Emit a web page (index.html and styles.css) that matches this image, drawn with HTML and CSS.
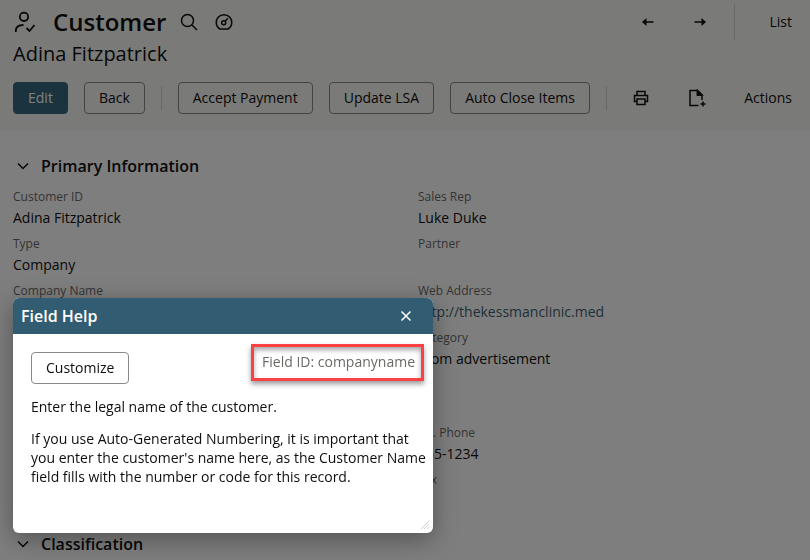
FILE: index.html
```
<!DOCTYPE html>
<html lang="en">
<head>
  <meta charset="UTF-8" />
  <meta name="viewport" content="width=device-width, initial-scale=1.0" />
  <title>Customer - Adina Fitzpatrick</title>
  <link rel="stylesheet" href="styles.css">
</head>
<body>

  <!-- Record header -->
  <header class="page-header">
    <div class="title-row">
      <svg class="icon record-icon" width="22" height="22" viewBox="0 0 22 22">
        <circle cx="11" cy="5.800" r="4.200" />
        <path d="M2.800 21v-1c0-3.500 2.700-6 7.700-6M13.500 17l3 3 5-6" />
      </svg>
      <h1>Customer</h1>
      <button class="icon-btn" aria-label="Search">
        <svg class="icon" width="18" height="18" viewBox="0 0 18 18">
          <circle cx="7.500" cy="7.500" r="6" />
          <path d="M12 12l5 5" />
        </svg>
      </button>
      <button class="icon-btn dashboard-btn" aria-label="Dashboard">
        <svg class="icon" width="18" height="18" viewBox="0 0 18 18">
          <path d="M4.700 16a7.800 7.800 0 1 1 8.600 0z" />
          <circle cx="8.700" cy="9.700" r="2" />
          <path d="M10 8.300l3-3" />
        </svg>
      </button>
      <nav class="record-nav">
        <button class="icon-btn" aria-label="Previous">
          <svg class="arrow" width="12" height="10" viewBox="0 0 12 10">
            <path d="M4.500 1v3.200H11.500v1.600H4.500V9L0 5z" />
          </svg>
        </button>
        <button class="icon-btn" aria-label="Next">
          <svg class="arrow" width="12" height="10" viewBox="0 0 12 10">
            <path d="M7.500 1v3.200H.5v1.600h7V9L12 5z" />
          </svg>
        </button>
        <a class="nav-link list-link" href="#">List</a>
      </nav>
    </div>
    <p class="record-name">Adina Fitzpatrick</p>

    <div class="toolbar">
      <button class="btn btn-primary">Edit</button>
      <button class="btn">Back</button>
      <span class="divider"></span>
      <button class="btn">Accept Payment</button>
      <button class="btn">Update LSA</button>
      <button class="btn">Auto Close Items</button>
      <span class="divider"></span>
      <div class="toolbar-end">
        <button class="icon-btn" aria-label="Print">
          <svg class="icon" width="16" height="16" viewBox="0 0 16 16">
            <path d="M4 5V1.500h8V5M4 11.500H1.500V5.500h13v6H12M4 9h8v5.500H4z" />
          </svg>
        </button>
        <button class="icon-btn" aria-label="New record">
          <svg class="icon" width="18" height="18" viewBox="0 0 18 18">
            <path d="M10.500 16.500H2v-15h7.500l4.500 4.500v5M9.500 1.500v4.500h4.500" />
            <path d="M9.500 1.500v4.500h4.500z" fill="currentColor" />
            <path d="M15 12.500v5M12.500 15h5" />
          </svg>
        </button>
        <a class="nav-link" href="#">Actions</a>
      </div>
    </div>
  </header>

  <main class="content">
    <section>
      <h2>
        <svg class="icon" width="12" height="8" viewBox="0 0 12 8"><path d="M1 1.500l5 5 5-5" /></svg>
        Primary Information
      </h2>
      <div class="columns">
        <dl class="fields">
          <div class="field"><dt>Customer ID</dt><dd>Adina Fitzpatrick</dd></div>
          <div class="field"><dt>Type</dt><dd>Company</dd></div>
          <div class="field"><dt>Company Name</dt><dd></dd></div>
        </dl>
        <dl class="fields">
          <div class="field"><dt>Sales Rep</dt><dd>Luke Duke</dd></div>
          <div class="field"><dt>Partner</dt><dd></dd></div>
          <div class="field"><dt>Web Address</dt><dd><a href="#">http://thekessmanclinic.med</a></dd></div>
          <div class="field"><dt>Category</dt><dd>From advertisement</dd></div>
          <div class="field field-group"><dt>Alt. Phone</dt><dd>555-1234</dd></div>
          <div class="field"><dt>Fax</dt><dd></dd></div>
        </dl>
      </div>
    </section>
    <section>
      <h2>
        <svg class="icon" width="12" height="8" viewBox="0 0 12 8"><path d="M1 1.500l5 5 5-5" /></svg>
        Classification
      </h2>
    </section>
  </main>

  <div class="overlay"></div>

  <!-- Field help popup -->
  <div class="dialog" role="dialog" aria-labelledby="dialog-title">
    <div class="dialog-header">
      <h3 id="dialog-title">Field Help</h3>
      <button class="close-btn" aria-label="Close">
        <svg class="icon" width="12" height="12" viewBox="0 0 12 12"><path d="M1.500 1.500l9 9M10.500 1.500l-9 9" /></svg>
      </button>
    </div>
    <div class="dialog-body">
      <div class="dialog-top">
        <button class="btn">Customize</button>
        <span class="field-id">Field ID: companyname</span>
      </div>
      <p>Enter the legal name of the customer.</p>
      <p>If you use Auto-Generated Numbering, it is important that you enter the customer's name here, as the Customer Name field fills with the number or code for this record.</p>
    </div>
    <svg class="resize-grip" width="8" height="8" viewBox="0 0 8 8"><path d="M0 8l8-8M3 8l5-5M6 8l2-2" /></svg>
  </div>

</body>
</html>
```

FILE: styles.css
```
* {
  margin: 0;
  padding: 0;
  box-sizing: border-box;
}

body {
  min-height: 100vh;
  background: #fdfdfd;
  color: #100f0e;
  font-family: "Open Sans", "Noto Sans", sans-serif;
  font-size: 14px;
  line-height: 20px;
  overflow: hidden;
}

button {
  font: inherit;
  color: inherit;
  cursor: pointer;
}

a {
  color: #3f5f73;
  text-decoration: none;
}

.icon {
  display: block;
  fill: none;
  stroke: currentColor;
  stroke-width: 1.5;
}

/* Record header */
.page-header {
  padding: 4px 18px 17px 13px;
  background: #f5f4f0;
}

.title-row {
  display: flex;
  align-items: center;
  height: 36px;
}

.record-icon {
  margin-right: 18px;
  stroke-width: 1.8;
}

h1 {
  font-size: 24px;
  line-height: 36px;
  font-weight: 600;
  margin-right: 14px;
}

.icon-btn {
  border: none;
  background: none;
}

.dashboard-btn {
  margin-left: 17px;
}

.record-nav {
  display: flex;
  align-items: center;
  gap: 40px;
  margin-left: auto;
}

.arrow {
  display: block;
  fill: currentColor;
}

.nav-link {
  color: inherit;
  font-weight: 500;
}

.list-link {
  margin-left: -12px;
  padding: 8px 0 8px 34px;
  border-left: 1px solid #d4d2ce;
}

.record-name {
  font-size: 20px;
  line-height: 28px;
}

.toolbar {
  display: flex;
  align-items: center;
  gap: 16px;
  margin-top: 14px;
}

.btn {
  height: 32px;
  padding: 0 14px;
  border: 1px solid #8b8987;
  border-radius: 4px;
  background: none;
  font-weight: 500;
  white-space: nowrap;
}

.btn-primary {
  border-color: #36677d;
  background: #36677d;
  color: #fff;
}

.divider {
  width: 1px;
  height: 24px;
  background: #d4d2ce;
}

.toolbar-end {
  flex: 1;
  display: flex;
  align-items: center;
  justify-content: space-between;
  padding-left: 10px;
}

/* Record fields */
.content {
  padding: 25px 13px 0;
}

h2 {
  display: flex;
  align-items: center;
  gap: 12px;
  padding-left: 4px;
  font-size: 16px;
  line-height: 20px;
  font-weight: 600;
}

.columns {
  display: grid;
  grid-template-columns: 1fr 1fr;
  gap: 26px;
  padding: 12px 0 16px;
}

.field {
  height: 47px;
}

.field-group {
  margin-top: 48px;
}

.field dt {
  font-size: 12px;
  line-height: 18px;
  color: #6b6966;
}

.field dd {
  line-height: 24px;
}

.overlay {
  position: fixed;
  inset: 0;
  background: rgba(0, 0, 0, 0.5);
}

/* Field help popup */
.dialog {
  position: absolute;
  left: 13px;
  top: 298px;
  width: 420px;
  min-height: 235px;
  border-radius: 6px;
  background: #fff;
  box-shadow: 0 6px 24px rgba(0, 0, 0, 0.35);
}

.dialog-header {
  display: flex;
  align-items: center;
  justify-content: space-between;
  height: 36px;
  padding: 0 21px 0 8px;
  border-radius: 6px 6px 0 0;
  background: #325c72;
  color: #fff;
}

h3 {
  font-size: 16px;
  font-weight: 600;
}

.close-btn {
  border: none;
  background: none;
}

.dialog-body {
  padding: 10px 4px 0 18px;
}

.dialog-top {
  display: flex;
  align-items: flex-start;
  justify-content: space-between;
  padding-right: 5px;
}

.dialog-top .btn {
  margin-top: 8px;
}

.field-id {
  padding: 5px 6px 6px 8px;
  border: 3px solid #fb4141;
  color: #6b6966;
  box-shadow: 0 3px 5px rgba(0, 0, 0, 0.4), inset 0 3px 5px rgba(0, 0, 0, 0.35);
}

.dialog-body p {
  margin-top: 13px;
  line-height: 19px;
}

.resize-grip {
  position: absolute;
  right: 4px;
  bottom: 4px;
  fill: none;
  stroke: #d0d0d0;
}
```
